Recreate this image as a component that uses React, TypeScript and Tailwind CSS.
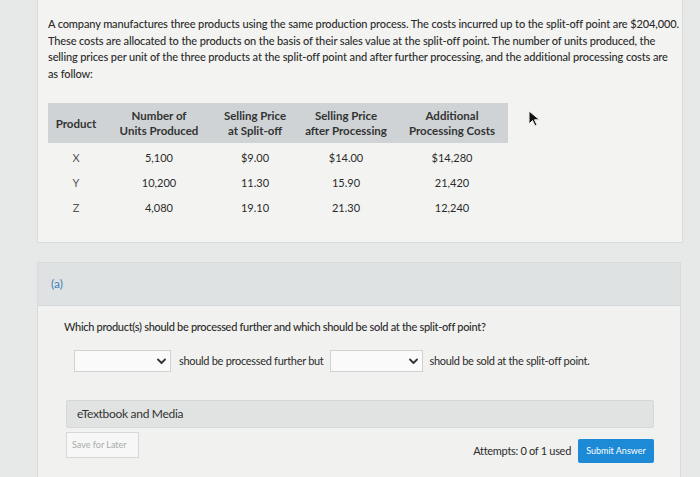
import React from "react";

function Chevron() {
  return (
    <svg width="9" height="7" viewBox="0 0 9 7" className="shrink-0">
      <path d="M1 1.5 L4.5 5 L8 1.5" fill="none" stroke="#333" strokeWidth="1.8" strokeLinecap="round" strokeLinejoin="round" />
    </svg>
  );
}

function Select({ w }: { w: string }) {
  return (
    <div className={`${w} h-[22px] bg-[#f9faf9] border border-[#cfd2d1] flex items-center justify-end pr-[4px]`}>
      <Chevron />
    </div>
  );
}

const rows = [
  ["X", "5,100", "$9.00", "$14.00", "$14,280"],
  ["Y", "10,200", "11.30", "15.90", "21,420"],
  ["Z", "4,080", "19.10", "21.30", "12,240"],
];

const colW = ["w-[56px]", "w-[110px]", "w-[82px]", "w-[100px]", "w-[112px]"];

export default function App() {
  return (
    <div
      className="w-[700px] h-[477px] bg-[#e7e9e8] overflow-hidden relative text-[#2b2b2b]"
      style={{ fontFamily: "Lato, 'Open Sans', sans-serif" }}
    >
      {/* top card */}
      <div className="ml-[37px] w-[646px] h-[243px] bg-[#f3f4f2] border border-t-0 border-[#d9dbda] pl-[10px] pt-[16px]">
        <div className="text-[11px] leading-[16.5px] tracking-[-0.12px] font-medium">
          <div className="whitespace-nowrap">A company manufactures three products using the same production process. The costs incurred up to the split-off point are $204,000.</div>
          <div className="whitespace-nowrap">These costs are allocated to the products on the basis of their sales value at the split-off point. The number of units produced, the</div>
          <div className="whitespace-nowrap">selling prices per unit of the three products at the split-off point and after further processing, and the additional processing costs are</div>
          <div className="whitespace-nowrap">as follow:</div>
        </div>
        <div className="mt-[21px] w-[460px]">
          <div className="flex h-[40px] bg-[#cfd3d5] items-center text-[11.5px] leading-[15px] font-bold text-[#333]">
            <div className={`${colW[0]} text-center`}>Product</div>
            <div className={`${colW[1]} text-center`}>Number of<br />Units Produced</div>
            <div className={`${colW[2]} text-center`}>Selling Price<br />at Split-off</div>
            <div className={`${colW[3]} text-center`}>Selling Price<br />after Processing</div>
            <div className={`${colW[4]} text-center`}>Additional<br />Processing Costs</div>
          </div>
          <div className="pt-[3px]">
            {rows.map((r, i) => (
              <div key={i} className="flex h-[25px] items-center text-[11px]">
                {r.map((c, j) => (
                  <div key={j} className={`${colW[j]} text-center ${j === 0 ? "text-[#555]" : ""}`}>
                    {c}
                  </div>
                ))}
              </div>
            ))}
          </div>
        </div>
      </div>

      {/* part (a) */}
      <div className="ml-[37px] mt-[19px] w-[644px] h-[220px] bg-[#f1f2f0] border border-[#d9dbda]">
        <div className="h-[43px] bg-[#dfe2e2] border-b border-[#d3d6d6] flex items-center pl-[13px]">
          <span className="text-[12px] text-[#3d7fb9]">(a)</span>
        </div>
        <div className="pl-[26px] pt-[14px]">
          <div className="text-[11px] tracking-[-0.3px] font-medium leading-[14px]">
            Which product(s) should be processed further and which should be sold at the split-off point?
          </div>
          <div className="flex items-center mt-[16px] ml-[10px] text-[11px] tracking-[-0.3px]">
            <Select w="w-[97px]" />
            <span className="ml-[8px] mr-[6px]">should be processed further but</span>
            <Select w="w-[93px]" />
            <span className="ml-[7px]">should be sold at the split-off point.</span>
          </div>
          <div className="mt-[28px] ml-[2px] w-[588px] h-[28px] bg-[#e1e3e3] border border-[#d5d8d8] rounded-[2px] flex items-center pl-[10px] text-[12px] text-[#333] tracking-[-0.3px]">
            eTextbook and Media
          </div>
          <div className="flex items-start ml-[2px] w-[588px] mt-[4px]">
            <div className="w-[73px] h-[26px] bg-[#f6f7f6] border border-[#d6d8d7] flex items-center pl-[5px] text-[9px] text-[#a9abaa]">
              Save for Later
            </div>
            <div className="flex-1 flex justify-end items-center pt-[7px]">
              <span className="text-[11px] tracking-[-0.3px] mr-[7px] text-[#2b2b2b]">Attempts: 0 of 1 used</span>
              <div className="w-[76px] h-[24px] bg-[#1c8ad6] rounded-[2px] flex items-center justify-center text-[9px] text-white">
                Submit Answer
              </div>
            </div>
          </div>
        </div>
      </div>

      {/* cursor */}
      <svg className="absolute left-[528px] top-[110px]" width="14" height="18" viewBox="0 0 14 18">
        <path d="M1 1 L1 14 L4.5 10.5 L7 16 L9 15 L6.5 9.8 L11.5 9.8 Z" fill="#111" stroke="#eee" strokeWidth="1" />
      </svg>
    </div>
  );
}
